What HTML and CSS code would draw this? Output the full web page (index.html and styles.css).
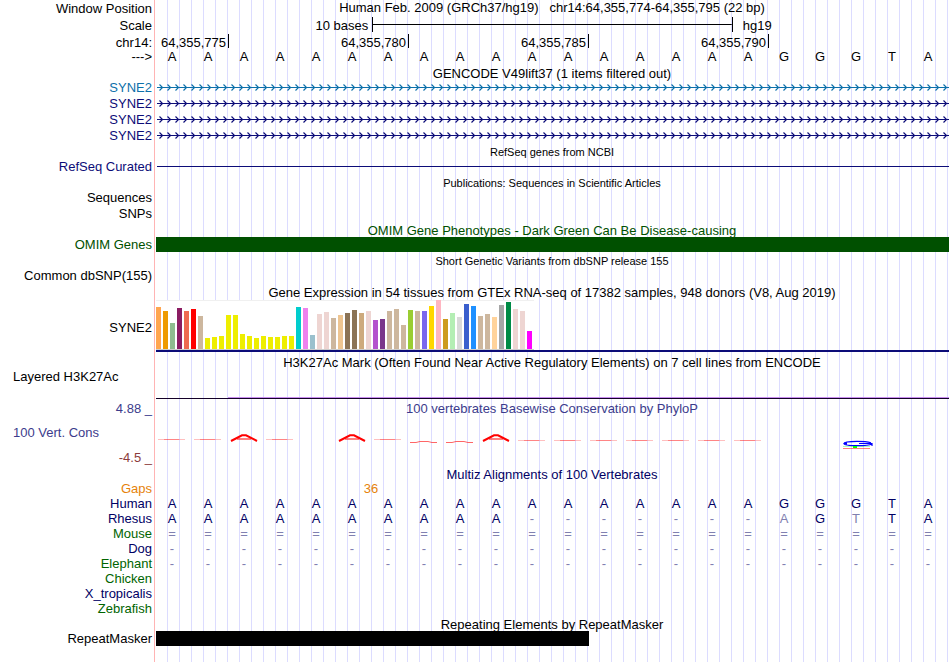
FILE: index.html
```html
<!DOCTYPE html>
<html lang="en">
<head>
  <meta charset="UTF-8">
  <meta name="viewport" content="width=device-width, initial-scale=1.0">
  <title>Human chr14:64,355,774-64,355,795 - Genome Browser</title>
  <link rel="stylesheet" href="styles.css">
</head>
<body>
  <main class="browser">

    <!-- ruler -->
    <div class="row tall ruler">
      <div class="label">Window Position</div>
      <div class="data title">Human Feb. 2009 (GRCh37/hg19) &nbsp; chr14:64,355,774-64,355,795 (22 bp)</div>
    </div>
    <div class="row tall ruler">
      <div class="label">Scale</div>
      <div class="data scale">
        <span class="scale-size">10 bases</span>
        <span class="scale-bar"></span>
        <span class="scale-db">hg19</span>
      </div>
    </div>
    <div class="row ruler">
      <div class="label">chr14:</div>
      <div class="data ticks">
        <span>64,355,775</span>
        <span>64,355,780</span>
        <span>64,355,785</span>
        <span>64,355,790</span>
      </div>
    </div>
    <div class="row tall">
      <div class="label">---&gt;</div>
      <div class="data bases" data-seq="AAAAAAAAAAAAAAAAAGGGTA"></div>
    </div>

    <!-- GENCODE -->
    <div class="row short">
      <div class="label"></div>
      <div class="data title">GENCODE V49lift37 (1 items filtered out)</div>
    </div>
    <div class="row item blue">
      <div class="label">SYNE2</div>
      <div class="data intron"></div>
    </div>
    <div class="row item navy">
      <div class="label">SYNE2</div>
      <div class="data intron"></div>
    </div>
    <div class="row item navy">
      <div class="label">SYNE2</div>
      <div class="data intron"></div>
    </div>
    <div class="row item navy">
      <div class="label">SYNE2</div>
      <div class="data intron"></div>
    </div>

    <!-- RefSeq -->
    <div class="row">
      <div class="label"></div>
      <div class="data title small">RefSeq genes from NCBI</div>
    </div>
    <div class="row item navy">
      <div class="label">RefSeq Curated</div>
      <div class="data intron"><div class="line"></div></div>
    </div>

    <!-- publications -->
    <div class="row">
      <div class="label"></div>
      <div class="data title small">Publications: Sequences in Scientific Articles</div>
    </div>
    <div class="row item">
      <div class="label">Sequences</div>
      <div class="data"></div>
    </div>
    <div class="row tall">
      <div class="label">SNPs</div>
      <div class="data"></div>
    </div>

    <!-- OMIM -->
    <div class="row short green">
      <div class="label"></div>
      <div class="data title">OMIM Gene Phenotypes - Dark Green Can Be Disease-causing</div>
    </div>
    <div class="row item green">
      <div class="label">OMIM Genes</div>
      <div class="data block"><div class="bar"></div></div>
    </div>

    <!-- dbSNP -->
    <div class="row">
      <div class="label"></div>
      <div class="data title small">Short Genetic Variants from dbSNP release 155</div>
    </div>
    <div class="row tall">
      <div class="label">Common dbSNP(155)</div>
      <div class="data"></div>
    </div>

    <!-- GTEx -->
    <div class="row">
      <div class="label"></div>
      <div class="data title">Gene Expression in 54 tissues from GTEx RNA-seq of 17382 samples, 948 donors (V8, Aug 2019)</div>
    </div>
    <div class="row gtex">
      <div class="label">SYNE2</div>
      <div class="data block">
        <div class="chart" id="gtexChart"></div>
        <div class="gene-model"></div>
      </div>
    </div>

    <!-- H3K27Ac -->
    <div class="row short">
      <div class="label"></div>
      <div class="data title">H3K27Ac Mark (Often Found Near Active Regulatory Elements) on 7 cell lines from ENCODE</div>
    </div>
    <div class="row h3k">
      <div class="label left">Layered H3K27Ac</div>
      <div class="data block"><div class="signal"></div></div>
    </div>

    <!-- PhyloP -->
    <div class="row slate">
      <div class="label">4.88 _</div>
      <div class="data title">100 vertebrates Basewise Conservation by PhyloP</div>
    </div>
    <div class="row cons">
      <div class="label">
        <span class="cons-name">100 Vert. Cons</span>
        <span class="cons-min">-4.5 _</span>
      </div>
      <div class="data">
        <svg class="logo" id="consLogo" viewBox="0 0 792 50" preserveAspectRatio="none"></svg>
      </div>
    </div>

    <!-- Multiz -->
    <div class="row short deep">
      <div class="label"></div>
      <div class="data title">Multiz Alignments of 100 Vertebrates</div>
    </div>
    <div class="row orange">
      <div class="label">Gaps</div>
      <div class="data gaps"><span>36</span></div>
    </div>
    <div class="row deep">
      <div class="label">Human</div>
      <div class="data bases" data-seq="AAAAAAAAAAAAAAAAAGGGTA"></div>
    </div>
    <div class="row deep">
      <div class="label">Rhesus</div>
      <div class="data bases" data-seq="AAAAAAAAAA-------aGtTA"></div>
    </div>
    <div class="row forest">
      <div class="label">Mouse</div>
      <div class="data bases" data-seq="======================"></div>
    </div>
    <div class="row deep">
      <div class="label">Dog</div>
      <div class="data bases" data-seq="----------------------"></div>
    </div>
    <div class="row forest">
      <div class="label">Elephant</div>
      <div class="data bases" data-seq="----------------------"></div>
    </div>
    <div class="row forest">
      <div class="label">Chicken</div>
      <div class="data"></div>
    </div>
    <div class="row deep">
      <div class="label">X_tropicalis</div>
      <div class="data"></div>
    </div>
    <div class="row item forest">
      <div class="label">Zebrafish</div>
      <div class="data"></div>
    </div>

    <!-- RepeatMasker -->
    <div class="row short">
      <div class="label"></div>
      <div class="data title">Repeating Elements by RepeatMasker</div>
    </div>
    <div class="row">
      <div class="label">RepeatMasker</div>
      <div class="data block"><div class="bar repeat"></div></div>
    </div>
    <div class="row rest">
      <div class="label"></div>
      <div class="data"></div>
    </div>
  </main>

  <script src="script.js"></script>
</body>
</html>
```
FILE: styles.css
```css
* {
  box-sizing: border-box;
}
body {
  margin: 0;
  background: #fff;
  color: #000;
  font-family: "Liberation Sans", Arial, Helvetica, sans-serif;
  font-size: 13px;
  line-height: 15px;
}
.browser {
  display: flex;
  flex-direction: column;
  min-height: 100vh;
  padding-right: 1px;
}

/* one row = label on the left, track data on the right */
.row {
  display: grid;
  grid-template-columns: 154px 1fr;
  grid-template-rows: 100%;
  height: 15px;
}
.row.short { height: 14px; }
.row.item { height: 16px; }
.row.tall { height: 17px; }
.row.rest { flex: 1; }
.label {
  padding-right: 2px;
  text-align: right;
  white-space: nowrap;
}
.label.left {
  padding-left: 13px;
  text-align: left;
}

/* guide lines, three per base */
.data {
  min-width: 0;
  border-left: 1px solid #ffb4b4;
  background-image: repeating-linear-gradient(to right,
    transparent 0 calc(100% / 66 - 1px),
    #dcdcff calc(100% / 66 - 1px) calc(100% / 66));
  background-size: calc(100% - 2px) 100%;
  background-position: 1px 0;
  background-repeat: no-repeat;
  white-space: nowrap;
}
.title { text-align: center; }
.small {
  padding-top: 2px;
  font-size: 11px;
  line-height: 13px;
}
.block { padding-left: 1px; }

/* track colours */
.blue { color: #0c70aa; }
.navy { color: #0c0c78; }
.green { color: #005000; }
.slate { color: #3c3c8c; }
.deep { color: #000064; }
.forest { color: #006400; }
.orange { color: #e6820a; }

/* ruler */
.ruler .label,
.scale,
.ticks {
  line-height: 17px;
}
.scale {
  display: grid;
  grid-template-columns: 6fr 10fr 6fr;
  padding-left: 1px;
}
.scale-size {
  padding-right: 4px;
  text-align: right;
}
.scale-bar {
  height: 15px;
  border: solid #000;
  border-width: 0 1px;
  background: linear-gradient(#000, #000) center / 100% 1px no-repeat;
}
.scale-db { padding-left: 10px; }
.ticks {
  display: grid;
  grid-template-columns: 2fr 5fr 5fr 5fr 5fr;
  padding-left: 2px;
}
.ticks span {
  height: 14px;
  padding-right: 2px;
  border-right: 1px solid #000;
  text-align: right;
}
.bases {
  display: grid;
  grid-template-columns: repeat(22, 1fr);
  padding-right: 2px;
  text-align: center;
}
.bases span { padding-right: 2px; }
.bases .faded { color: #8080b0; }

/* gene lines */
.intron {
  padding-left: 2px;
}
.intron svg {
  display: block;
}
.line {
  height: 1px;
  margin-top: 7px;
  background: currentColor;
}
.bar {
  height: 15px;
  background: currentColor;
}
.repeat { width: calc(100% * 12 / 22); }

/* GTEx */
.row.gtex { height: 55px; }
.gtex .label { padding-top: 20px; }
.chart {
  display: flex;
  align-items: flex-end;
  gap: 2px;
  width: 378px;
  height: 50px;
  border-bottom: 1px solid #ccc;
  background: #fff;
  box-shadow: inset 0 1px #f0f0f0;
}
.chart div { width: 5px; }
.gene-model {
  height: 2px;
  background: #0c0c78;
}

/* H3K27Ac */
.row.h3k { height: 32px; }
.signal {
  height: 30px;
  border-bottom: 1px solid #140028;
  background: linear-gradient(#c88cf0, #c88cf0) 72px 100% / 100% 1px no-repeat;
}

/* conservation */
.row.cons { height: 51px; }
.cons .label {
  display: flex;
  flex-direction: column;
  justify-content: space-between;
  padding-top: 9px;
  padding-bottom: 2px;
}
.cons-name {
  padding-left: 13px;
  color: #3c3c8c;
  text-align: left;
}
.cons-min { color: #8c3c3c; }
.logo {
  display: block;
  width: calc(100% - 2px);
  height: 50px;
}
.gaps {
  display: grid;
  grid-template-columns: 5fr 2fr 15fr;
  padding-right: 2px;
  text-align: center;
}
.gaps span { grid-column: 2; }
```
FILE: script.js
```js
// median expression per tissue: [height, colour]
const tissues = [
  [42, "#ffa54f"], [38, "#ee9a00"], [26, "#8fbc8f"], [41, "#8b1c62"], [38, "#ee6a50"],
  [40, "#ff0000"], [33, "#cdb79e"], [11, "#eeee00"], [12, "#eeee00"], [13, "#eeee00"],
  [34, "#eeee00"], [34, "#eeee00"], [15, "#eeee00"], [13, "#eeee00"], [11, "#eeee00"],
  [13, "#eeee00"], [12, "#eeee00"], [12, "#eeee00"], [13, "#eeee00"], [13, "#eeee00"],
  [42, "#00cdcd"], [41, "#ee82ee"], [14, "#9ac0cd"], [35, "#eed5d2"], [37, "#eed5d2"],
  [31, "#cdb79e"], [34, "#eec591"], [36, "#8b7355"], [39, "#8b7355"], [36, "#cdaa7d"],
  [38, "#eed5d2"], [29, "#b452cd"], [30, "#7a378b"], [38, "#cdb79e"], [40, "#cdb79e"],
  [24, "#cdb79e"], [39, "#9acd32"], [38, "#cdb79e"], [38, "#7a67ee"], [43, "#ffd700"],
  [49, "#ffb6c1"], [30, "#cd9b1d"], [36, "#b4eeb4"], [32, "#d9d9d9"], [45, "#3a5fcd"],
  [43, "#1e90ff"], [33, "#cdb79e"], [35, "#cdb79e"], [32, "#ffd39b"], [44, "#a6a6a6"],
  [47, "#008b45"], [40, "#eed5d2"], [38, "#eed5d2"], [18, "#ff00ff"]
];

document.getElementById("gtexChart").innerHTML = tissues
  .map(([height, colour]) => `<div style="height:${height}px;background:${colour}"></div>`)
  .join("");

// sequence rows, lower case = mismatch
document.querySelectorAll(".bases").forEach(row => {
  row.innerHTML = [...row.dataset.seq].map(base => {
    const faded = /[a-z=-]/.test(base);
    return `<span${faded ? ' class="faded"' : ""}>${base.toUpperCase()}</span>`;
  }).join("");
});

// introns with strand arrows
document.querySelectorAll(".intron:empty").forEach((track, i) => {
  track.innerHTML = `
    <svg width="100%" height="16">
      <defs>
        <pattern id="strand${i}" width="8" height="16" patternUnits="userSpaceOnUse">
          <path d="M2.5 4.5L5.5 7.5L2.5 10.5" fill="none" stroke="currentColor" stroke-width="1.2"/>
          <path d="M0 7.5H8" stroke="currentColor"/>
        </pattern>
      </defs>
      <rect width="100%" height="16" fill="url(#strand${i})"/>
    </svg>`;
});

// conservation logo
const flat = (x, y) => `
  <path d="M${x} ${y}h27" stroke="#ff0000" stroke-opacity="0.25"/>
  <path d="M${x + 6} ${y}h15" stroke="#ff0000" stroke-opacity="0.3"/>`;
const arc = x => `<path d="M${x} 26.5h6l4 -1h8l4 1h5" fill="none" stroke="#ff0000" stroke-opacity="0.6"/>`;
const peak = x => `
  <path d="M${x + 1} 25L${x + 12} 19.3h4L${x + 27} 25" fill="none" stroke="#ff0000" stroke-width="2"/>
  <path d="M${x + 7} 23h14" stroke="#ff0000"/>`;

let logo = "";
[0, 1, 3, 6].forEach(i => logo += flat(3 + i * 36, 23.5));
[10, 11, 12, 13, 14, 15, 16].forEach(i => logo += flat(3 + i * 36, 24.5));
[7, 8].forEach(i => logo += arc(3 + i * 36));
[2, 5, 9].forEach(i => logo += peak(3 + i * 36));
logo += `
  <path d="M716 26.7C712 25.5 706 25.3 702 25.3C694 25.3 689 26 689 27.5C689 29 696 29.7 703 29.7C709 29.7 714 29.5 717 28M704 27.5H717V30" fill="none" stroke="#0000ff" stroke-width="1.2"/>
  <path d="M688 27.5L692 26V29Z" fill="#0000ff"/>
  <path d="M688 30.5h27" stroke="#00ff00" stroke-opacity="0.3"/>
  <path d="M698 30h4v2h-4z" fill="#00ff00"/>
  <path d="M688 32.5h27" stroke="#ff0000" stroke-opacity="0.5"/>`;
document.getElementById("consLogo").innerHTML = logo;
```
